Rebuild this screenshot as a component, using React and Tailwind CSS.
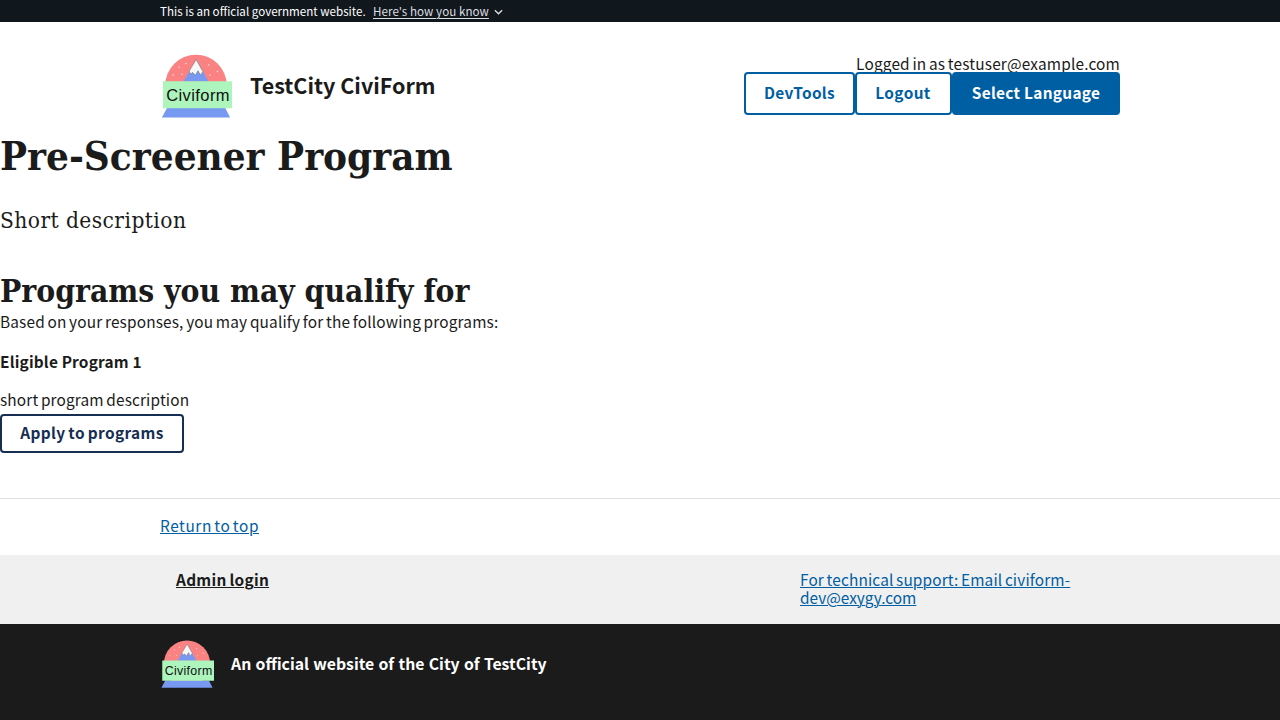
const sans = "font-['Noto_Sans_CJK_SC','Noto_Sans',sans-serif]";
const condensed = "font-['DejaVu_Serif_Condensed','DejaVu_Serif',serif] [font-stretch:condensed]";

function Logo({ className }) {
  return (
    <svg viewBox="0 0 74 66" className={className} role="img">
      <circle cx="36" cy="31.5" r="30.8" fill="#fa8282" />
      <path d="M36.3 5.5 48.5 27.5h-25z" fill="#7799f2" />
      <path d="M36.2 5.6 43 17.8l-2.7 3.1-2.3-4.2-2.7 4.6-2.8-3-1.8 2-1.5-3.2z" fill="#f8f8f8" stroke="#666" strokeWidth="0.5" />
      <g fill="#fff" fillOpacity="0.7">
        <circle cx="26" cy="9.5" r="0.8" />
        <circle cx="19" cy="13.3" r="0.8" />
        <circle cx="13" cy="21" r="0.8" />
        <circle cx="22" cy="20.3" r="0.8" />
        <circle cx="48.7" cy="11" r="0.8" />
        <circle cx="57.5" cy="17.5" r="0.8" />
        <circle cx="50" cy="21" r="0.8" />
      </g>
      <path d="M7 54h58.3l4.8 9.6H1.9z" fill="#7799f2" />
      <path d="M3 27.2h69v27.1H3z" fill="#adf4bd" />
      <text x="6.2" y="47.3" fontSize="16.5" textLength="63.4" fill="#111" className="font-['Liberation_Sans',sans-serif]">Civiform</text>
    </svg>
  );
}

export default function App() {
  return (
    <div className={`min-h-[720px] w-full bg-white text-[15.4px] leading-[18px] text-[#1b1b1b] ${sans}`}>
      <div className="h-[22px] bg-[#10171d] text-white">
        <div className="mx-auto flex h-[22px] w-[960px] items-center text-[11.6px] leading-[16px]">
          <span className="w-[213px] whitespace-nowrap">This is an official government website.</span>
          <span className="whitespace-nowrap tracking-[0.05px] text-[#dcdee0] underline decoration-1 underline-offset-2">Here&#39;s how you know</span>
          <svg viewBox="0 0 10 6" className="ml-[5px] mt-[2px] h-[6px] w-[9px]" fill="none" stroke="#dcdee0" strokeWidth="1.5">
            <path d="m1 1 4 4 4-4" />
          </svg>
        </div>
      </div>

      <header className="mx-auto flex h-[110px] w-[960px] justify-between pt-8">
        <div className="flex">
          <Logo className="h-[66px] w-[74px]" />
          <div className="ml-4 mt-4 whitespace-nowrap text-[21.5px] font-bold leading-[30px]">TestCity CiviForm</div>
        </div>
        <div className="flex flex-col items-end">
          <div className="h-[18px] whitespace-nowrap leading-[18px] tracking-[0.17px] [word-spacing:-1px]">Logged in as testuser@example.com</div>
          <div className="flex font-bold tracking-[0.3px]">
            <button className="relative h-[43px] w-[111px] rounded-[4px] border-2 border-[#005ea2] bg-white pb-1 text-[#005ea2]">DevTools</button>
            <button className="relative h-[43px] w-[97px] rounded-[4px] border-2 border-[#005ea2] bg-white pb-1 pr-px tracking-[0.4px] text-[#005ea2]">Logout</button>
            <button className="relative h-[43px] w-[168px] rounded-[4px] bg-[#005ea2] pb-1 text-white">Select Language</button>
          </div>
        </div>
      </header>

      <main className="flex h-[366px] flex-col items-start whitespace-nowrap">
        <h1 className={`h-[48px] text-[40px] font-bold leading-[48px] ${condensed}`}>Pre-Screener Program</h1>
        <p className={`mt-[24px] h-[33px] text-[22.5px] leading-[32px] tracking-[0.44px] ${condensed}`}>Short description</p>
        <h2 className={`mt-[34px] h-[40px] text-[31.5px] font-bold leading-[40px] ${condensed}`}>Programs you may qualify for</h2>
        <p className="mt-px tracking-[0.16px] [word-spacing:-1px]">Based on your responses, you may qualify for the following programs:</p>
        <h3 className="mt-[22px] font-bold tracking-[0.18px]">Eligible Program 1</h3>
        <p className="mt-[20px] tracking-[0.14px] [word-spacing:-1px]">short program description</p>
        <button className="mt-[6px] h-[39px] w-[184px] rounded-[4px] border-2 border-[#162e51] pb-1 font-bold tracking-[0.36px] text-[#162e51] [word-spacing:-1px]">Apply to programs</button>
      </main>

      <footer>
        <div className="h-[57px] border-t border-[#dfe1e2]">
          <div className="mx-auto w-[960px] pt-[17px]">
            <a className="tracking-[0.56px] text-[#005ea2] underline decoration-1 underline-offset-1 [word-spacing:-1.5px]">Return to top</a>
          </div>
        </div>
        <div className="h-[69px] bg-[#f0f0f0]">
          <div className="mx-auto flex w-[960px] pt-[15px]">
            <div className="ml-4 w-[624px] font-bold">
              <a className="tracking-[0.29px] underline decoration-1 underline-offset-1 [word-spacing:-1px]">Admin login</a>
            </div>
            <a className="whitespace-nowrap text-[#005ea2] underline decoration-1 underline-offset-1"><span className="tracking-[0.14px] [word-spacing:-1px]">For technical support: Email civiform-</span><br />dev@exygy.com</a>
          </div>
        </div>
        <div className="h-[96px] bg-[#1b1b1b] pt-4 text-white">
          <div className="mx-auto flex w-[960px] items-start">
            <Logo className="h-[49.5px] w-[55.5px]" />
            <p className="ml-[15.5px] mt-[15px] whitespace-nowrap text-[15.8px] font-bold [word-spacing:0.7px]">An official website of the City of TestCity</p>
          </div>
        </div>
      </footer>
    </div>
  );
}
